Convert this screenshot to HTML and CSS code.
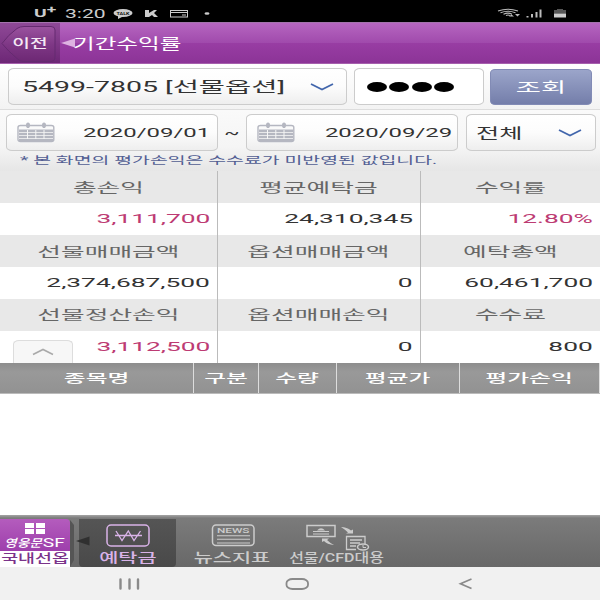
FILE: index.html
```html
<!DOCTYPE html>
<html lang="ko">
<head>
<meta charset="utf-8">
<title>기간수익률</title>
<link rel="stylesheet" href="styles.css">
</head>
<body>
<div class="status">
  <span class="t carrier">U<sup>+</sup></span>
  <span class="t clock">3:20</span>
  <svg class="status-left" width="100" height="22" viewBox="0 0 100 22">
    <ellipse cx="13" cy="13" rx="9.5" ry="4" fill="#ccc"/><path d="M8 15v4l6-3z" fill="#ccc"/>
    <text x="6.5" y="15.2" textLength="13" lengthAdjust="spacingAndGlyphs" class="talk">TALK</text>
    <path d="M35 10h4v3l5-3h3l-3 3 4 4h-4l-2-2-3 2h-4z" fill="#ccc"/>
    <rect x="60.5" y="10.500" width="17" height="6.500" fill="none" stroke="#ccc"/><path d="M61 12.500h16M72 15h4" stroke="#ccc"/>
    <ellipse cx="97" cy="13.500" rx="2.500" ry="1.300" fill="#ccc"/>
  </svg>
  <svg class="status-right" width="72" height="22" viewBox="0 0 72 22">
    <g fill="none" stroke="#bbb" stroke-width="1.100"><path d="M1 11Q11 7.500 21 11M3.500 12.700Q11 9.700 18.500 12.700M6.500 14.200Q11 12 15 14.200M9 15.500Q11 14.500 13 15.500"/></g>
    <path d="M18 14h5l-2.500 2.500zM12 16.500l2.500-2 2.500 2z" fill="#bbb"/>
    <path d="M29.500 17.500v-1.500h2v1.500zM34 17.500V14h2v3.500zM38.500 17.500V12h2v5.500zM42.500 17.500V9.500h2v8z" fill="#bbb"/>
    <path d="M57 13.500V10h3V9h6v1h3v3.500z" fill="#555"/><path d="M57 13.500h12v4H57z" fill="#ccc"/>
  </svg>
</div>

<header class="header">
  <div class="back">
    <svg width="60" height="42" viewBox="0 0 60 42">
      <defs><linearGradient id="bk" x2="0" y2="1"><stop offset="0" stop-color="#9b539f"/><stop offset=".5" stop-color="#7f3886"/><stop offset="1" stop-color="#6d2874"/></linearGradient></defs>
      <path d="M2 20.500Q8 12 17 5.500Q20 3.500 24 3.500H51Q55 3.500 55 7V34Q55 38.500 51 38.500H23Q20 38.500 17 35.500Q8 28 2 20.500Z" fill="url(#bk)" stroke="#652a70"/>
    </svg>
    <span class="t back-label">이전</span>
  </div>
  <svg class="pointer" width="15" height="10" viewBox="0 0 15 10"><path d="M0 5L14 .5V9.500Z" fill="#deb2e2"/></svg>
  <span class="t title">기간수익률</span>
</header>

<section class="row account-row">
  <div class="box account"><span class="t left">5499-7805 [선물옵션]</span>
    <svg width="24" height="8" viewBox="0 0 24 8"><path class="chev" d="M1 1L12 6.500L23 1"/></svg></div>
  <div class="box password"><i></i><i></i><i></i><i></i></div>
  <div class="query"><span class="t">조회</span></div>
</section>

<section class="date-area">
  <div class="row date-row">
    <div class="box date">
      <svg width="38" height="21" viewBox="0 0 38 21"><use href="#cal"/></svg>
      <span class="t right">2020/09/01</span></div>
    <div class="tilde"><span class="t">~</span></div>
    <div class="box date">
      <svg width="38" height="21" viewBox="0 0 38 21"><g id="cal"><path d="M3.500 3.500H34.500Q36.800 3.500 36.800 5.500V17.500Q36.800 19.500 34.500 19.500H3.500Q1 19.500 1 17.500V5.500Q1 3.500 3.500 3.500Z" fill="#fafafa" stroke="#b5b7c1" stroke-width="1.400"/><path d="M2 7.500H36V19H2z" fill="#b5b7c1"/><path d="M2 10.500H36M2 13.500H36M2 16.500H36" stroke="#f5f5f5" stroke-width=".8"/><path d="M10.500 8v9M18.800 8v9M27 8v9" stroke="#f5f5f5"/><ellipse cx="11" cy="3.200" rx="2" ry="2.800" fill="#b5b7c1"/><ellipse cx="27" cy="3.200" rx="2" ry="2.800" fill="#b5b7c1"/></g></svg>
      <span class="t right">2020/09/29</span></div>
    <div class="box kind"><span class="t left">전체</span>
      <svg width="24" height="8" viewBox="0 0 24 8"><path class="chev" d="M1 1L12 6.500L23 1"/></svg></div>
  </div>
  <p class="note"><span class="t left">* 본 화면의 평가손익은 수수료가 미반영된 값입니다.</span></p>
</section>

<section class="summary">
  <div class="label"><span class="t">총손익</span></div><div class="label"><span class="t">평균예탁금</span></div><div class="label"><span class="t">수익률</span></div>
  <div class="value up"><span class="t right">3,111,700</span></div><div class="value"><span class="t right">24,310,345</span></div><div class="value up"><span class="t right">12.80%</span></div>
  <div class="label"><span class="t">선물매매금액</span></div><div class="label"><span class="t">옵션매매금액</span></div><div class="label"><span class="t">예탁총액</span></div>
  <div class="value"><span class="t right">2,374,687,500</span></div><div class="value"><span class="t right">0</span></div><div class="value"><span class="t right">60,461,700</span></div>
  <div class="label"><span class="t">선물정산손익</span></div><div class="label"><span class="t">옵션매매손익</span></div><div class="label"><span class="t">수수료</span></div>
  <div class="value up last"><div class="fold"><svg width="22" height="8" viewBox="0 0 22 8"><path d="M1 6.500L11 1.500L21 6.500" fill="none" stroke="#aaa" stroke-width="1.600"/></svg></div><span class="t right">3,112,500</span></div><div class="value"><span class="t right">0</span></div><div class="value"><span class="t right">800</span></div>
</section>

<section class="list-head">
  <div><span class="t">종목명</span></div><div><span class="t">구분</span></div><div><span class="t">수량</span></div><div><span class="t">평균가</span></div><div><span class="t">평가손익</span></div>
</section>
<main class="list"></main>

<nav class="tabs">
  <div class="brand">
    <div class="brand-top">
      <div class="tiles"><i></i><i></i><i></i><i></i></div>
      <div class="logo"><span class="t left script">영웅문</span><span class="t right sf">SF</span></div>
    </div>
    <div class="brand-name"><span class="t">국내선옵</span></div>
  </div>
  <div class="gap">
    <svg width="22" height="52" viewBox="0 0 22 52"><path d="M0 5L4 10V45L0 52z" fill="#555"/><path d="M6 26L19.500 21.500V30.500z" fill="#303030"/></svg>
  </div>
  <div class="tab active">
    <svg width="96" height="32" viewBox="0 0 96 32"><rect x="27" y="10" width="42" height="21" rx="4" fill="none" stroke="#d9b3e8" stroke-width="1.500"/><path d="M36 16L42 25.500L48.300 16L54 25.500L60.500 16M35 20.500H62" fill="none" stroke="#d9b3e8" stroke-width="1.300"/></svg>
    <span class="t">예탁금</span>
  </div>
  <div class="tab news">
    <svg width="112" height="32" viewBox="0 0 112 32"><rect x="36.500" y="10" width="41.500" height="20.500" rx="3.500" fill="none" stroke="#ccc" stroke-width="1.500"/><text x="41" y="17.500" textLength="32.500" lengthAdjust="spacingAndGlyphs" class="news-text">NEWS</text><path d="M41 20.700H74M41 24.300H74M41 28H74" stroke="#ccc" stroke-width="1.100"/></svg>
    <span class="t">뉴스지표</span>
  </div>
  <div class="tab swap">
    <svg width="98" height="36" viewBox="0 0 98 36"><g fill="none" stroke="#ccc" stroke-width="1.500"><rect x="19" y="10.500" width="28" height="11"/><path d="M25 16.500h16M25 19h16" stroke-width="1"/><path d="M68 34.500H58.500V21.500H77V29M62 25H74M62 28H72M62 31H68" stroke-width="1.300"/><ellipse cx="75" cy="32" rx="5.500" ry="3"/><path d="M75 30v2.500h3" stroke-width="1"/></g><path d="M29 15.500Q33 11 37 15.500zM53 12Q59 12 63 15.500L65 14.500V18.500H58L60 17.500Q57 14.500 53 12zM34 23.500H41L39 25Q42 28 46 30Q39 29.500 36 26L34 27z" fill="#ccc"/></svg>
    <span class="t">선물/CFD대용</span>
  </div>
</nav>

<footer class="system">
  <svg width="600" height="33" viewBox="0 0 600 33"><g fill="none" stroke="#8a8a8a"><path d="M120.500 12.500V21.500M129.500 12.500V21.500M138 12.500V21.500" stroke-width="2.400" stroke-linecap="round"/><rect x="286.500" y="12" width="21.500" height="10" rx="6" ry="4" stroke-width="1.800"/><path d="M471.500 12L460.500 16.700L471.500 21.500" stroke-width="1.700"/></g></svg>
</footer>
</body>
</html>
```
FILE: styles.css
```css
* { box-sizing: border-box; }
body {
  margin: 0; width: 600px; height: 600px; overflow: hidden; background: #fff;
  display: flex; flex-direction: column;
  font-family: Roboto, "Noto Sans CJK KR", sans-serif; color: #333;
}
svg { display: block; flex: none; }
.t { display: inline-block; white-space: nowrap; line-height: 1; transform: scaleX(1.95); }
.t.left { transform-origin: left center; }
.t.right { transform-origin: right center; }

.status { height: 22px; flex: none; background: #000; display: flex; align-items: center; color: #ccc; padding-left: 34px; }
.carrier { font-size: 11px; font-weight: 700; width: 31px; padding-top: 5px; transform-origin: left center; transform: scaleX(1.75); }
.carrier sup { font-size: 10px; line-height: 0; vertical-align: 4px; }
.clock { font-size: 12px; width: 45px; padding-top: 5px; transform-origin: left center; transform: scaleX(1.76); }
.talk { font: 700 4px Roboto, sans-serif; fill: #111; }
.status-right { margin-left: 287px; }

.header { height: 42px; flex: none; display: flex; align-items: center; border-top: 1px solid #a473ad; border-bottom: 1px solid #a65fad; background: linear-gradient(#b666c0, #a04aac 50%, #983da3 51%, #8c3497); color: #fff; }
.back { width: 60px; height: 40px; position: relative; background: linear-gradient(#8f4997, #6d2776); }
.back-label { position: absolute; left: 19px; top: 15px; font-size: 12px; font-weight: 500; transform: scaleX(1.6); color: #f5e9f5; }
.pointer { margin-left: 1px; }
.title { font-size: 15px; font-weight: 400; transform-origin: left center; transform: scaleX(1.57); margin: 2px 0 0 -3px; }

.row { display: flex; align-items: center; }
.box { border: 1px solid #ccc; border-radius: 6px / 4px; background: linear-gradient(#fff, #fcfcfc 50%, #eee); display: flex; align-items: center; justify-content: space-between; }
.chev { fill: none; stroke: #4266ac; stroke-width: 1.8; }
.account-row { height: 46px; flex: none; padding: 0 8px; background: linear-gradient(#fff, #f3f3f3); border-bottom: 1px solid #ddd; }
.account { width: 339px; height: 37px; padding: 1px 12px 0 13px; font-size: 15px; }
.account .t { transform: scaleX(1.9); }
.password { width: 130px; height: 37px; margin-left: 7px; padding-left: 12px; justify-content: flex-start; gap: 2.3px; background: #fff; }
.password i { width: 20px; height: 10px; border-radius: 50%; background: #000; }
.query { width: 102px; height: 36px; margin-left: 6px; border: 1px solid #828bb5; border-radius: 5px / 4px; background: linear-gradient(#9ba5ca, #747eaa); display: flex; align-items: center; justify-content: center; color: #fff; font-size: 14px; }

.date-area { height: 61px; flex: none; background: linear-gradient(#fafafa, #f5f5f5 60%, #e6e6e6); padding-top: 4px; }
.date-row { padding-left: 6px; }
.date { width: 212px; height: 37px; padding: 0 7px 0 10px; font-size: 13px; }
.date:nth-child(3) { padding-right: 5px; }
.date .t { transform: scaleX(1.84); }
.tilde { width: 28px; text-align: center; font-size: 14px; }
.tilde .t { transform: scaleX(1.6); }
.kind { width: 130px; height: 37px; margin-left: 8px; padding: 0 13px 0 9px; font-size: 14px; }
.kind .t { transform: scaleX(1.8); }
.note { margin: 3px 0 0 20px; font-size: 10px; line-height: 14px; color: #525e93; }
.note .t { transform: scaleX(1.94); }

.summary { flex: none; height: 192px; display: grid; grid-template-columns: 218px 203px 179px; grid-template-rows: 32px 32px 32px 31.5px 32px 32.5px; border-bottom: 1px solid #ddd; }
.summary > div { border-right: 1px solid #bbb; display: flex; align-items: center; }
.summary > div:nth-child(3n) { border-right: 0; }
.summary .label { background: #e8e8e8; justify-content: center; color: #666; font-size: 13px; }
.summary .label .t { transform: translateX(-.5px) scaleX(1.98); }
.summary .value { background: #fff; justify-content: flex-end; padding-right: 7px; font-size: 13.5px; }
.summary .up { color: #bd3b73; }
.summary .last { justify-content: space-between; align-items: center; padding-left: 13px; }
.fold { align-self: flex-end; width: 60px; height: 23px; border: 1px solid #ddd; border-bottom: 0; border-radius: 6px 6px 0 0 / 4px 4px 0 0; background: #f7f7f7; display: flex; align-items: center; justify-content: center; }

.list-head { flex: none; height: 31px; display: grid; grid-template-columns: 194px 65px 78px 123px 140px; background: linear-gradient(#8d8d8d, #999 30%, #929292); border-bottom: 1px solid #bbb; color: #fff; font-size: 12px; font-weight: 500; }
.list-head div { display: flex; align-items: center; justify-content: center; border-right: 1px solid #ddd; padding-top: 2px; }
.list-head .t { transform: scaleX(1.98); }
.list { flex: 1; background: #fff; }

.tabs { flex: none; height: 52px; display: flex; background: linear-gradient(#a5a5a5, #7b7b7b 3px, #686868); color: #ccc; }
.brand { width: 70px; padding-top: 4px; }
.brand-top { height: 32px; border-radius: 0 4px 0 0; background: linear-gradient(#b45cbd, #9e3fac); padding-top: 4px; color: #fff; }
.tiles { display: grid; grid-template-columns: 9px 9px; gap: 1.5px 2px; margin-left: 25px; }
.tiles i { height: 4.500px; background: #fff; }
.logo { display: flex; justify-content: space-between; padding: 3px 5px 0 4px; font-size: 12px; }
.script { font-family: "Noto Sans CJK KR", sans-serif; font-style: italic; font-weight: 500; font-size: 11px; transform: scaleX(1.25); }
.sf { transform: scaleX(1.6); }
.brand-name { height: 16px; background: #fff; color: #7b338a; display: flex; align-items: center; justify-content: center; font-size: 12.5px; font-weight: 500; }
.brand-name .t { transform: scaleX(1.47); }
.gap { width: 9px; position: relative; }
.gap svg { position: absolute; left: 0; top: 0; z-index: 1; }
.tab { height: 52px; display: flex; flex-direction: column; align-items: center; font-size: 13px; font-weight: 500; }
.tab .t { margin-top: 4px; transform: scaleX(1.6); }
.active { width: 97px; color: #d9b3e8; background: linear-gradient(transparent 4px, #555 4px, #494949); border-radius: 4px; }
.news { width: 112px; }
.swap { width: 98px; }
.swap .t { margin-top: 0; transform: scaleX(1.23); }
.news-text { font: 500 7px Roboto, sans-serif; fill: #ccc; }
.system { flex: none; height: 33px; background: #f1f1f1; }
```
